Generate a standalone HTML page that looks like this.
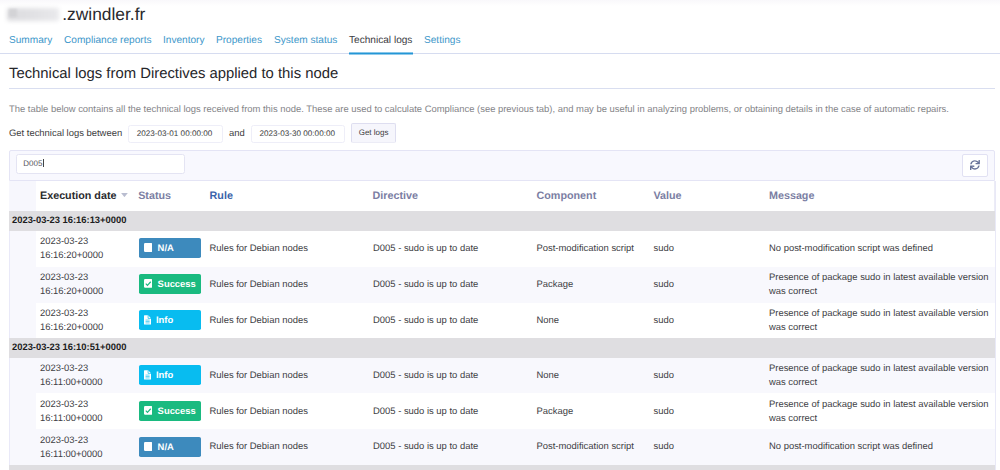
<!DOCTYPE html>
<html>
<head>
<meta charset="utf-8">
<style>
*{box-sizing:border-box;margin:0;padding:0}
html,body{width:1000px;height:470px;overflow:hidden;background:#fff}
body{font-family:"Liberation Sans",sans-serif;color:#36363a;position:relative;text-rendering:geometricPrecision}
.abs{position:absolute;white-space:nowrap}
#title{left:62.2px;top:2px;font-size:17.4px;line-height:24px;color:#2a2a2e}
#blur{left:7.2px;top:8px;width:51.5px;height:12.5px;background:linear-gradient(90deg,#dcdcdf 0%,#e1e1e4 50%,#e9e9ec 100%);filter:blur(2.2px);border-radius:2px}
#blur2{left:8.5px;top:8.5px;width:8px;height:8px;background:#d3d3d6;filter:blur(1.2px)}
#tabs{left:0;top:30px;width:1000px;height:24px;border-bottom:1px solid #d6dcf0}
.tab{position:absolute;top:35px;font-size:10.1px;line-height:12px;color:#4097ca;white-space:nowrap}
.tab.act{color:#3c3c42}
#tabul{left:349px;top:52px;width:64.4px;height:3px;background:linear-gradient(rgba(36,150,214,.55) 0,rgba(36,150,214,.55) 1px,#2496d6 1px,#2496d6 2px,rgba(36,150,214,.5) 2px,rgba(36,150,214,.5) 3px)}
#h3{left:9px;top:65px;font-size:14.85px;line-height:18px;color:#26262a}
#hr1{left:9px;top:88px;width:986px;height:1px;background:#d9def0}
#desc{left:9px;top:103px;font-size:9.43px;line-height:12px;color:#848488}
#gl{left:9px;top:126.5px;font-size:9.43px;line-height:12px;color:#3c3c40}
.inp{position:absolute;height:18px;border:1px solid #eeeef8;border-radius:2.5px;background:#fff;font-size:8.15px;line-height:15.4px;color:#3c3c40;white-space:nowrap}
#btn{left:351.2px;top:122.7px;width:44.8px;height:20.5px;border:1px solid #dedef0;border-bottom-color:#ececf6;border-radius:2px;background:#f6f6fc;font-size:8px;line-height:17.6px;text-align:center;color:#3c3c40}
#panel{left:9px;top:150.2px;width:986px;height:30.6px;background:#f8f8fe;border:1px solid #e4e4f5;border-radius:2px 2px 0 0}
#refresh{left:961.6px;top:154.4px;width:26.2px;height:22.2px;background:#fff;border:1px solid #e1e1f3;border-radius:2px}
#tbl{left:9px;top:180.8px;width:986px;height:290px;border-left:1px solid #ececf6;border-right:1px solid #ececf6}
.th{position:absolute;top:189.6px;font-size:10.75px;line-height:13px;font-weight:bold;color:#7b7ea3;white-space:nowrap}
.grp{position:absolute;left:9px;width:986px;height:20px;background:#dfdee1;font-size:9.4px;font-weight:bold;color:#1c1c20;line-height:18.6px;padding-left:3px;white-space:nowrap}
.row{position:absolute;left:9px;width:986px;background:#fff}
.row.alt{background:#f8f8fd}
.c{position:absolute;font-size:9.43px;line-height:12px;color:#404044;white-space:nowrap}
.badge{position:absolute;left:138.6px;width:62.6px;height:20px;border-radius:1.8px;color:#fff;font-weight:bold;font-size:9.43px;line-height:19.6px;white-space:nowrap}
.gut{position:absolute;left:0;top:0;width:27px;height:100%;background:#f8f8fd;border-left:1px solid #e9e9f8}
#thgut{left:9px;top:180.8px;width:27px;height:30px;background:#f7f7fd}
.ic{position:absolute}
.na{background:#3d8abd}.ok{background:#1aba80}.info{background:#08bcf0}
</style>
</head>
<body>
<div class="abs" style="left:0;top:0;width:1000px;height:6px;background:linear-gradient(#f9f8fb,#fff)"></div>
<div class="abs" id="blur"></div><div class="abs" id="blur2"></div>
<div class="abs" id="title">.zwindler.fr</div>
<div class="abs" id="tabs"></div>
<span class="tab" style="left:9px">Summary</span>
<span class="tab" style="left:64px">Compliance reports</span>
<span class="tab" style="left:163px">Inventory</span>
<span class="tab" style="left:216px">Properties</span>
<span class="tab" style="left:274px">System status</span>
<span class="tab act" style="left:349px">Technical logs</span>
<span class="tab" style="left:424px">Settings</span>
<div class="abs" id="tabul"></div>
<div class="abs" id="h3">Technical logs from Directives applied to this node</div>
<div class="abs" id="hr1"></div>
<div class="abs" id="desc">The table below contains all the technical logs received from this node. These are used to calculate Compliance (see previous tab), and may be useful in analyzing problems, or obtaining details in the case of automatic repairs.</div>
<div class="abs" id="gl">Get technical logs between</div>
<div class="inp" style="left:128px;top:125px;width:95px;padding-left:7.8px">2023-03-01 00:00:00</div>
<div class="abs" style="left:229px;top:126.6px;font-size:9.43px;line-height:12px;color:#3c3c40">and</div>
<div class="inp" style="left:251px;top:125px;width:94px;padding-left:7.5px">2023-03-30 00:00:00</div>
<div class="abs" id="btn">Get logs</div>
<div class="abs" id="panel"></div>
<div class="inp" style="left:16px;top:154px;width:168.5px;height:20px;line-height:17.7px;padding-left:6.3px;border-color:#e4e4f3;font-size:8px;color:#55555a">D005<span style="display:inline-block;width:0.8px;height:8px;background:#444;vertical-align:-1.2px;margin-left:0.3px"></span></div>
<div class="abs" id="refresh"><svg style="position:absolute;left:7.2px;top:4.4px" width="9.9" height="9.9" viewBox="0 0 512 512"><path fill="#69739a" d="M440.65 12.57l4 82.77A247.16 247.16 0 0 0 255.83 8C134.73 8 33.91 94.92 12.29 209.82A12 12 0 0 0 24.09 224h49.05a12 12 0 0 0 11.67-9.26 175.91 175.91 0 0 1 317-56.94l-101.46-4.86a12 12 0 0 0-12.57 12v47.41a12 12 0 0 0 12 12H500a12 12 0 0 0 12-12V12a12 12 0 0 0-12-12h-47.37a12 12 0 0 0-11.98 12.57zM255.83 432a175.61 175.61 0 0 1-146-77.8l101.8 4.87a12 12 0 0 0 12.57-12v-47.4a12 12 0 0 0-12-12H12a12 12 0 0 0-12 12V500a12 12 0 0 0 12 12h47.35a12 12 0 0 0 12-12.6l-4.15-82.57A247.17 247.17 0 0 0 255.83 504c121.11 0 221.93-86.92 243.55-201.82a12 12 0 0 0-11.8-14.18h-49.05a12 12 0 0 0-11.67 9.26A175.86 175.86 0 0 1 255.83 432z"/></svg></div>
<div class="abs" id="tbl"></div>
<div class="abs" id="thgut"></div>
<span class="th" style="left:40px;color:#2a2a2e">Execution date</span>
<svg class="abs" style="left:121.3px;top:193.1px" width="6.9" height="4.2" viewBox="0 0 8 5"><path d="M0 0 H8 L4 5 Z" fill="#b9bdd0"/></svg>
<span class="th" style="left:138.2px">Status</span>
<span class="th" style="left:209.6px;color:#3a64aa">Rule</span>
<span class="th" style="left:372.5px">Directive</span>
<span class="th" style="left:536.5px">Component</span>
<span class="th" style="left:653.5px">Value</span>
<span class="th" style="left:769px">Message</span>
<div class="grp" style="top:211px">2023-03-23 16:16:13+0000</div>
<div class="row" style="top:231px;height:36px"><div class="gut"></div></div>
<div class="c" style="left:40px;top:234.73px">2023-03-23</div>
<div class="c" style="left:40px;top:248.73px">16:16:20+0000</div>
<div class="badge na" style="top:238px"><svg class="ic" style="left:5.1px;top:5.3px" width="8.4" height="8.9" viewBox="0 0 8 8" preserveAspectRatio="none"><rect x="0" y="0" width="8" height="8" rx="1.1" fill="#fff"/></svg><span style="position:absolute;left:19.0px;top:0">N/A</span></div>
<div class="c" style="left:209.5px;top:241.73px">Rules for Debian nodes</div>
<div class="c" style="left:373px;top:241.73px">D005 - sudo is up to date</div>
<div class="c" style="left:536.5px;top:241.73px">Post-modification script</div>
<div class="c" style="left:653.5px;top:241.73px">sudo</div>
<div class="c" style="left:769px;top:241.73px">No post-modification script was defined</div>
<div class="row alt" style="top:267px;height:36px"><div class="gut"></div></div>
<div class="c" style="left:40px;top:270.73px">2023-03-23</div>
<div class="c" style="left:40px;top:284.73px">16:16:20+0000</div>
<div class="badge ok" style="top:274px"><svg class="ic" style="left:5.2px;top:5.2px" width="8.4" height="8.8" viewBox="0 0 8 8" preserveAspectRatio="none"><rect x="0" y="0" width="8" height="8" rx="1.1" fill="#fff"/><path d="M1.7 4.2 L3.3 5.8 L6.4 2.5" fill="none" stroke="#1aba80" stroke-width="1.15"/></svg><span style="position:absolute;left:19.0px;top:0">Success</span></div>
<div class="c" style="left:209.5px;top:277.73px">Rules for Debian nodes</div>
<div class="c" style="left:373px;top:277.73px">D005 - sudo is up to date</div>
<div class="c" style="left:536.5px;top:277.73px">Package</div>
<div class="c" style="left:653.5px;top:277.73px">sudo</div>
<div class="c" style="left:769px;top:270.73px">Presence of package sudo in latest available version</div>
<div class="c" style="left:769px;top:284.73px">was correct</div>
<div class="row" style="top:303px;height:35px"><div class="gut"></div></div>
<div class="c" style="left:40px;top:306.73px">2023-03-23</div>
<div class="c" style="left:40px;top:320.73px">16:16:20+0000</div>
<div class="badge info" style="top:310px"><svg class="ic" style="left:5.0px;top:4.7px" width="7.2" height="9.9" viewBox="0 0 7 9"><path d="M0.5 0 H4 L7 3 V8.5 Q7 9 6.5 9 H0.5 Q0 9 0 8.5 V0.5 Q0 0 0.5 0 Z" fill="#fff"/><path d="M4 0 V3 H7" fill="none" stroke="#08bcf0" stroke-width="0.7"/><path d="M1.5 4.6 H5.5 M1.5 6 H5.5 M1.5 7.4 H5.5" stroke="#08bcf0" stroke-width="0.6"/></svg><span style="position:absolute;left:17.3px;top:0">Info</span></div>
<div class="c" style="left:209.5px;top:313.73px">Rules for Debian nodes</div>
<div class="c" style="left:373px;top:313.73px">D005 - sudo is up to date</div>
<div class="c" style="left:536.5px;top:313.73px">None</div>
<div class="c" style="left:653.5px;top:313.73px">sudo</div>
<div class="c" style="left:769px;top:306.73px">Presence of package sudo in latest available version</div>
<div class="c" style="left:769px;top:320.73px">was correct</div>
<div class="grp" style="top:338px">2023-03-23 16:10:51+0000</div>
<div class="row alt" style="top:358px;height:35px"><div class="gut"></div></div>
<div class="c" style="left:40px;top:361.73px">2023-03-23</div>
<div class="c" style="left:40px;top:375.73px">16:11:00+0000</div>
<div class="badge info" style="top:365px"><svg class="ic" style="left:5.0px;top:4.7px" width="7.2" height="9.9" viewBox="0 0 7 9"><path d="M0.5 0 H4 L7 3 V8.5 Q7 9 6.5 9 H0.5 Q0 9 0 8.5 V0.5 Q0 0 0.5 0 Z" fill="#fff"/><path d="M4 0 V3 H7" fill="none" stroke="#08bcf0" stroke-width="0.7"/><path d="M1.5 4.6 H5.5 M1.5 6 H5.5 M1.5 7.4 H5.5" stroke="#08bcf0" stroke-width="0.6"/></svg><span style="position:absolute;left:17.3px;top:0">Info</span></div>
<div class="c" style="left:209.5px;top:368.73px">Rules for Debian nodes</div>
<div class="c" style="left:373px;top:368.73px">D005 - sudo is up to date</div>
<div class="c" style="left:536.5px;top:368.73px">None</div>
<div class="c" style="left:653.5px;top:368.73px">sudo</div>
<div class="c" style="left:769px;top:361.73px">Presence of package sudo in latest available version</div>
<div class="c" style="left:769px;top:375.73px">was correct</div>
<div class="row" style="top:393px;height:36px"><div class="gut"></div></div>
<div class="c" style="left:40px;top:397.73px">2023-03-23</div>
<div class="c" style="left:40px;top:411.73px">16:11:00+0000</div>
<div class="badge ok" style="top:401px"><svg class="ic" style="left:5.2px;top:5.2px" width="8.4" height="8.8" viewBox="0 0 8 8" preserveAspectRatio="none"><rect x="0" y="0" width="8" height="8" rx="1.1" fill="#fff"/><path d="M1.7 4.2 L3.3 5.8 L6.4 2.5" fill="none" stroke="#1aba80" stroke-width="1.15"/></svg><span style="position:absolute;left:19.0px;top:0">Success</span></div>
<div class="c" style="left:209.5px;top:404.73px">Rules for Debian nodes</div>
<div class="c" style="left:373px;top:404.73px">D005 - sudo is up to date</div>
<div class="c" style="left:536.5px;top:404.73px">Package</div>
<div class="c" style="left:653.5px;top:404.73px">sudo</div>
<div class="c" style="left:769px;top:397.73px">Presence of package sudo in latest available version</div>
<div class="c" style="left:769px;top:411.73px">was correct</div>
<div class="row alt" style="top:429px;height:36px"><div class="gut"></div></div>
<div class="c" style="left:40px;top:433.73px">2023-03-23</div>
<div class="c" style="left:40px;top:447.73px">16:11:00+0000</div>
<div class="badge na" style="top:437px"><svg class="ic" style="left:5.1px;top:5.3px" width="8.4" height="8.9" viewBox="0 0 8 8" preserveAspectRatio="none"><rect x="0" y="0" width="8" height="8" rx="1.1" fill="#fff"/></svg><span style="position:absolute;left:19.0px;top:0">N/A</span></div>
<div class="c" style="left:209.5px;top:439.73px">Rules for Debian nodes</div>
<div class="c" style="left:373px;top:439.73px">D005 - sudo is up to date</div>
<div class="c" style="left:536.5px;top:439.73px">Post-modification script</div>
<div class="c" style="left:653.5px;top:439.73px">sudo</div>
<div class="c" style="left:769px;top:439.73px">No post-modification script was defined</div>
<div class="grp" style="top:465px"></div>
<div class="abs" style="left:995px;top:181px;width:1px;height:289px;background:#e9e9f7"></div>
</body>
</html>
